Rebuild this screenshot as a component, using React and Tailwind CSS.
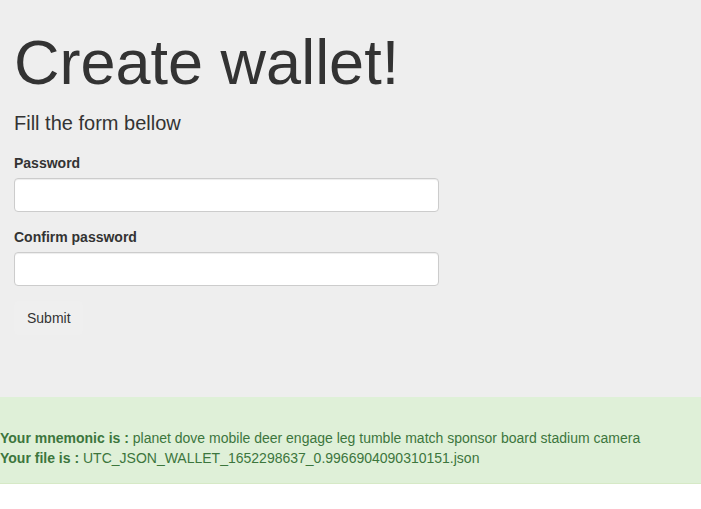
export default function App() {
  return (
    <div className="min-h-[509px] bg-white text-[#333] font-['Liberation_Sans',Arial,sans-serif]">
      <div className="bg-[#eee] px-[14px] pt-[28px] pb-[62px]">
        <h1 className="text-[63px] leading-[69px] font-normal">Create wallet!</h1>
        <p className="mt-[12px] text-[20px] leading-[28px]">Fill the form bellow</p>

        <form className="mt-[16px] w-[425px]" onSubmit={(e) => e.preventDefault()}>
          <div className="mb-[15px]">
            <label className="block mb-[5px] text-[14px] leading-[20px] font-bold">Password</label>
            <input
              type="password"
              className="block w-full h-[34px] bg-white border border-[#ccc] rounded-[4px] px-3 text-[14px] shadow-[inset_0_1px_1px_rgba(0,0,0,0.075)] outline-none"
            />
          </div>
          <div className="mb-[15px]">
            <label className="block mb-[5px] text-[14px] leading-[20px] font-bold">Confirm password</label>
            <input
              type="password"
              className="block w-full h-[34px] bg-white border border-[#ccc] rounded-[4px] px-3 text-[14px] shadow-[inset_0_1px_1px_rgba(0,0,0,0.075)] outline-none"
            />
          </div>
          <button
            type="submit"
            className="h-[34px] pl-[13px] pr-[12px] text-[14px] leading-[20px] text-[#333] bg-[#efefef] rounded-[4px]"
          >
            Submit
          </button>
        </form>
      </div>

      <div className="bg-[#dff0d8] text-[#3c763d] border-b border-[#d6e9c6] pt-[31px] pb-[15px] text-[14px] leading-[20px]">
        <div>
          <strong>Your mnemonic is :</strong> planet dove mobile deer engage leg tumble match sponsor board stadium camera
        </div>
        <div>
          <strong>Your file is :</strong> UTC_JSON_WALLET_1652298637_0.9966904090310151.json
        </div>
      </div>
    </div>
  );
}
